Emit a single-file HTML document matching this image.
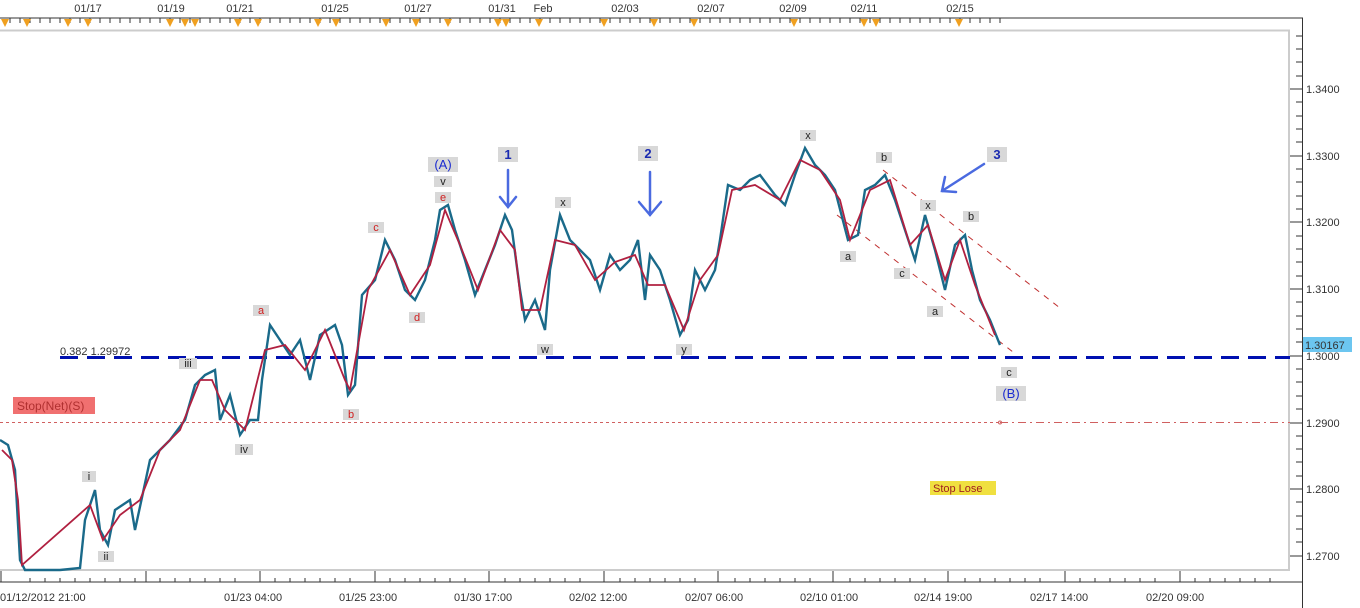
<!DOCTYPE html>
<html><head><meta charset="utf-8"><style>
body{margin:0;background:#fff;width:1360px;height:608px;overflow:hidden}
svg{display:block;font-family:"Liberation Sans","DejaVu Sans",sans-serif}
.t{font-size:11px;fill:#333}
.lb{fill:#d8d8d8}
</style></head><body>
<svg width="1360" height="608" viewBox="0 0 1360 608">
<line x1="0" y1="18" x2="1303" y2="18" stroke="#333"/>
<line x1="0" y1="30.5" x2="1290" y2="30.5" stroke="#ccc" stroke-width="2"/>
<g stroke="#333">
<path d="M10 18v5M20 18v5M30 18v5M40 18v5M50 18v5M60 18v5M70 18v5M80 18v5M90 18v5M100 18v5M110 18v5M120 18v5M130 18v5M140 18v5M150 18v5M160 18v5M170 18v5M180 18v5M190 18v5M200 18v5M210 18v5M220 18v5M230 18v5M240 18v5M250 18v5M260 18v5M270 18v5M280 18v5M290 18v5M300 18v5M310 18v5M320 18v5M330 18v5M340 18v5M350 18v5M360 18v5M370 18v5M380 18v5M390 18v5M400 18v5M410 18v5M420 18v5M430 18v5M440 18v5M450 18v5M460 18v5M470 18v5M480 18v5M490 18v5M500 18v5M510 18v5M520 18v5M530 18v5M540 18v5M550 18v5M560 18v5M570 18v5M580 18v5M590 18v5M600 18v5M610 18v5M620 18v5M630 18v5M640 18v5M650 18v5M660 18v5M670 18v5M680 18v5M690 18v5M700 18v5M710 18v5M720 18v5M730 18v5M740 18v5M750 18v5M760 18v5M770 18v5M780 18v5M790 18v5M800 18v5M810 18v5M820 18v5M830 18v5M840 18v5M850 18v5M860 18v5M870 18v5M880 18v5M890 18v5M900 18v5M910 18v5M920 18v5M930 18v5M940 18v5M950 18v5M960 18v5M970 18v5M980 18v5M990 18v5M1000 18v5"/>
</g>
<g fill="#f0a020">
<path d="M1 19h8l-4 8zM23 19h8l-4 8zM64 19h8l-4 8zM84 19h8l-4 8zM166 19h8l-4 8zM181 19h8l-4 8zM191 19h8l-4 8zM234 19h8l-4 8zM254 19h8l-4 8zM314 19h8l-4 8zM332 19h8l-4 8zM382 19h8l-4 8zM412 19h8l-4 8zM444 19h8l-4 8zM494 19h8l-4 8zM502 19h8l-4 8zM535 19h8l-4 8zM600 19h8l-4 8zM650 19h8l-4 8zM690 19h8l-4 8zM790 19h8l-4 8zM860 19h8l-4 8zM872 19h8l-4 8zM955 19h8l-4 8z"/>
</g>
<g class="t" text-anchor="middle">
<text x="88" y="12">01/17</text><text x="171" y="12">01/19</text><text x="240" y="12">01/21</text>
<text x="335" y="12">01/25</text><text x="418" y="12">01/27</text><text x="502" y="12">01/31</text>
<text x="543" y="12">Feb</text><text x="625" y="12">02/03</text><text x="711" y="12">02/07</text>
<text x="793" y="12">02/09</text><text x="864" y="12">02/11</text><text x="960" y="12">02/15</text>
</g>
<line x1="1289" y1="30" x2="1289" y2="570" stroke="#ccc" stroke-width="2"/>
<line x1="1302.5" y1="18" x2="1302.5" y2="608" stroke="#333"/>
<g stroke="#333">
<path d="M1296 36h6M1296 49h6M1296 62h6M1296 76h6M1290 89h12M1296 102h6M1296 116h6M1296 129h6M1296 142h6M1290 156h12M1296 169h6M1296 182h6M1296 196h6M1296 209h6M1290 222h12M1296 236h6M1296 249h6M1296 262h6M1296 276h6M1290 289h12M1296 302h6M1296 316h6M1296 329h6M1296 342h6M1290 356h12M1296 369h6M1296 382h6M1296 396h6M1296 409h6M1290 423h12M1296 436h6M1296 449h6M1296 462h6M1296 476h6M1290 489h12M1296 502h6M1296 516h6M1296 529h6M1296 542h6M1290 556h12"/>
</g>
<g class="t">
<text x="1306" y="93">1.3400</text><text x="1306" y="160">1.3300</text><text x="1306" y="226">1.3200</text>
<text x="1306" y="293">1.3100</text><text x="1306" y="360">1.3000</text><text x="1306" y="427">1.2900</text>
<text x="1306" y="493">1.2800</text><text x="1306" y="560">1.2700</text>
</g>
<rect x="1303" y="337" width="49" height="15" fill="#6cc6f0"/>
<text x="1305" y="349" class="t" fill="#002">1.30167</text>
<line x1="0" y1="570" x2="1290" y2="570" stroke="#ccc" stroke-width="2"/>
<line x1="0" y1="582" x2="1303" y2="582" stroke="#333"/>
<g stroke="#333">
<path d="M1 571v11M30 578v4M45 578v4M60 578v4M75 578v4M90 578v4M105 578v4M120 578v4M135 578v4M146 571v11M160 578v4M175 578v4M190 578v4M205 578v4M220 578v4M235 578v4M260 571v11M275 578v4M290 578v4M305 578v4M320 578v4M335 578v4M350 578v4M375 571v11M390 578v4M405 578v4M420 578v4M435 578v4M450 578v4M465 578v4M489 571v11M505 578v4M520 578v4M535 578v4M550 578v4M565 578v4M580 578v4M604 571v11M620 578v4M635 578v4M650 578v4M665 578v4M680 578v4M695 578v4M718 571v11M735 578v4M750 578v4M765 578v4M780 578v4M795 578v4M810 578v4M833 571v11M850 578v4M865 578v4M880 578v4M895 578v4M910 578v4M925 578v4M948 571v11M965 578v4M980 578v4M995 578v4M1010 578v4M1025 578v4M1040 578v4M1065 571v11M1080 578v4M1095 578v4M1110 578v4M1125 578v4M1140 578v4M1155 578v4M1180 571v11M1195 578v4M1210 578v4M1225 578v4M1240 578v4M1255 578v4M1270 578v4"/>
</g>
<g class="t" font-size="12">
<text x="0" y="601">01/12/2012 21:00</text><text x="224" y="601">01/23 04:00</text><text x="339" y="601">01/25 23:00</text>
<text x="454" y="601">01/30 17:00</text><text x="569" y="601">02/02 12:00</text><text x="685" y="601">02/07 06:00</text>
<text x="800" y="601">02/10 01:00</text><text x="914" y="601">02/14 19:00</text><text x="1030" y="601">02/17 14:00</text>
<text x="1146" y="601">02/20 09:00</text>
</g>
<line x1="0" y1="422.5" x2="1000" y2="422.5" stroke="#d06060" stroke-dasharray="3,3"/>
<line x1="1000" y1="422.5" x2="1290" y2="422.5" stroke="#d06060" stroke-dasharray="8,4,2,4"/>
<circle cx="1000" cy="422.5" r="1.5" fill="none" stroke="#d06060"/>
<line x1="60" y1="357.5" x2="1290" y2="357.5" stroke="#0010b0" stroke-width="3" stroke-dasharray="18,9"/>
<text x="60" y="355" class="t">0.382 1.29972</text>
<line x1="883" y1="170" x2="1060" y2="308" stroke="#c03030" stroke-dasharray="6,6"/>
<line x1="837" y1="215" x2="1013" y2="352" stroke="#c03030" stroke-dasharray="6,6"/>
<rect x="13" y="397" width="82" height="17" fill="#f07070"/>
<text x="17" y="410" font-size="12" fill="#b03030">Stop(Net)(S)</text>
<rect x="930" y="481" width="66" height="14" fill="#f0e040"/>
<text x="933" y="492" font-size="11" fill="#a02020">Stop Lose</text>
<polyline fill="none" stroke="#1a6a8a" stroke-width="2.4" points="0,440 8,445 15,470 20,560 25,570 60,570 80,568 85,520 95,490 100,530 108,545 115,510 130,500 135,530 150,460 170,440 185,420 195,385 205,375 215,370 220,420 230,395 240,435 250,420 258,420 262,380 270,325 280,340 290,355 300,340 310,380 320,335 335,325 342,345 348,395 355,385 362,295 375,280 385,240 395,260 405,290 415,300 425,280 435,240 440,210 448,205 455,230 465,260 475,295 485,270 495,245 505,215 512,230 520,290 525,320 535,300 545,330 550,270 560,215 570,240 580,250 590,260 600,290 610,255 620,270 630,260 638,240 645,300 650,255 660,270 670,300 680,335 688,320 695,270 705,290 715,270 720,240 728,185 740,190 750,180 760,175 775,195 785,205 795,175 805,148 815,165 825,175 835,190 848,240 858,235 865,190 875,185 885,175 895,200 905,230 915,260 925,215 935,250 945,290 955,245 965,235 972,270 980,300 990,320 1000,345"/>
<polyline fill="none" stroke="#b02040" stroke-width="1.8" points="2,450 12,460 18,500 22,565 90,505 103,540 120,515 140,500 160,450 180,430 200,380 212,380 225,410 245,430 265,350 285,345 305,370 325,330 345,380 350,390 368,290 390,250 410,295 430,265 445,210 460,245 478,290 500,230 515,250 522,310 540,310 555,240 575,245 595,280 615,262 635,255 648,285 665,285 684,330 700,280 718,255 732,190 755,185 780,200 800,160 820,170 840,200 850,240 870,190 890,180 910,245 928,225 945,280 960,240 975,285 995,335"/>
<g font-size="11" text-anchor="middle">
<g fill="#222">
<rect class="lb" x="82" y="471" width="14" height="11"/><text x="89" y="480">i</text>
<rect class="lb" x="98" y="551" width="16" height="11"/><text x="106" y="560">ii</text>
<rect class="lb" x="179" y="358" width="18" height="11"/><text x="188" y="367">iii</text>
<rect class="lb" x="235" y="444" width="18" height="11"/><text x="244" y="453">iv</text>
<rect class="lb" x="434" y="176" width="18" height="11"/><text x="443" y="185">v</text>
<rect class="lb" x="555" y="197" width="16" height="11"/><text x="563" y="206">x</text>
<rect class="lb" x="537" y="344" width="16" height="11"/><text x="545" y="353">w</text>
<rect class="lb" x="676" y="344" width="16" height="11"/><text x="684" y="353">y</text>
<rect class="lb" x="800" y="130" width="16" height="11"/><text x="808" y="139">x</text>
<rect class="lb" x="876" y="152" width="16" height="11"/><text x="884" y="161">b</text>
<rect class="lb" x="840" y="251" width="16" height="11"/><text x="848" y="260">a</text>
<rect class="lb" x="894" y="268" width="16" height="11"/><text x="902" y="277">c</text>
<rect class="lb" x="920" y="200" width="16" height="11"/><text x="928" y="209">x</text>
<rect class="lb" x="963" y="211" width="16" height="11"/><text x="971" y="220">b</text>
<rect class="lb" x="927" y="306" width="16" height="11"/><text x="935" y="315">a</text>
<rect class="lb" x="1001" y="367" width="16" height="11"/><text x="1009" y="376">c</text>
</g>
<g fill="#d02020">
<rect class="lb" x="253" y="305" width="16" height="11"/><text x="261" y="314">a</text>
<rect class="lb" x="343" y="409" width="16" height="11"/><text x="351" y="418">b</text>
<rect class="lb" x="368" y="222" width="16" height="11"/><text x="376" y="231">c</text>
<rect class="lb" x="409" y="312" width="16" height="11"/><text x="417" y="321">d</text>
<rect class="lb" x="435" y="192" width="16" height="11"/><text x="443" y="201">e</text>
</g>
<g fill="#1a2ad0" font-size="13">
<rect class="lb" x="428" y="157" width="30" height="15"/><text x="443" y="169">(A)</text>
<rect class="lb" x="996" y="386" width="30" height="15"/><text x="1011" y="398">(B)</text>
</g>
<g fill="#1a2ab0" font-size="13" font-weight="bold">
<rect class="lb" x="498" y="147" width="20" height="15"/><text x="508" y="159">1</text>
<rect class="lb" x="638" y="146" width="20" height="15"/><text x="648" y="158">2</text>
<rect class="lb" x="987" y="147" width="20" height="15"/><text x="997" y="159">3</text>
</g>
</g>
<g stroke="#4a6ae0" stroke-width="2.5" fill="none" stroke-linecap="round">
<path d="M508 170v37M500 197l8 10 8-10"/>
<path d="M650 172v43M639 202l11 13 11-13"/>
<path d="M984 164l-42 27M945 177l-3 14 14 1"/>
</g>
</svg>
</body></html>
